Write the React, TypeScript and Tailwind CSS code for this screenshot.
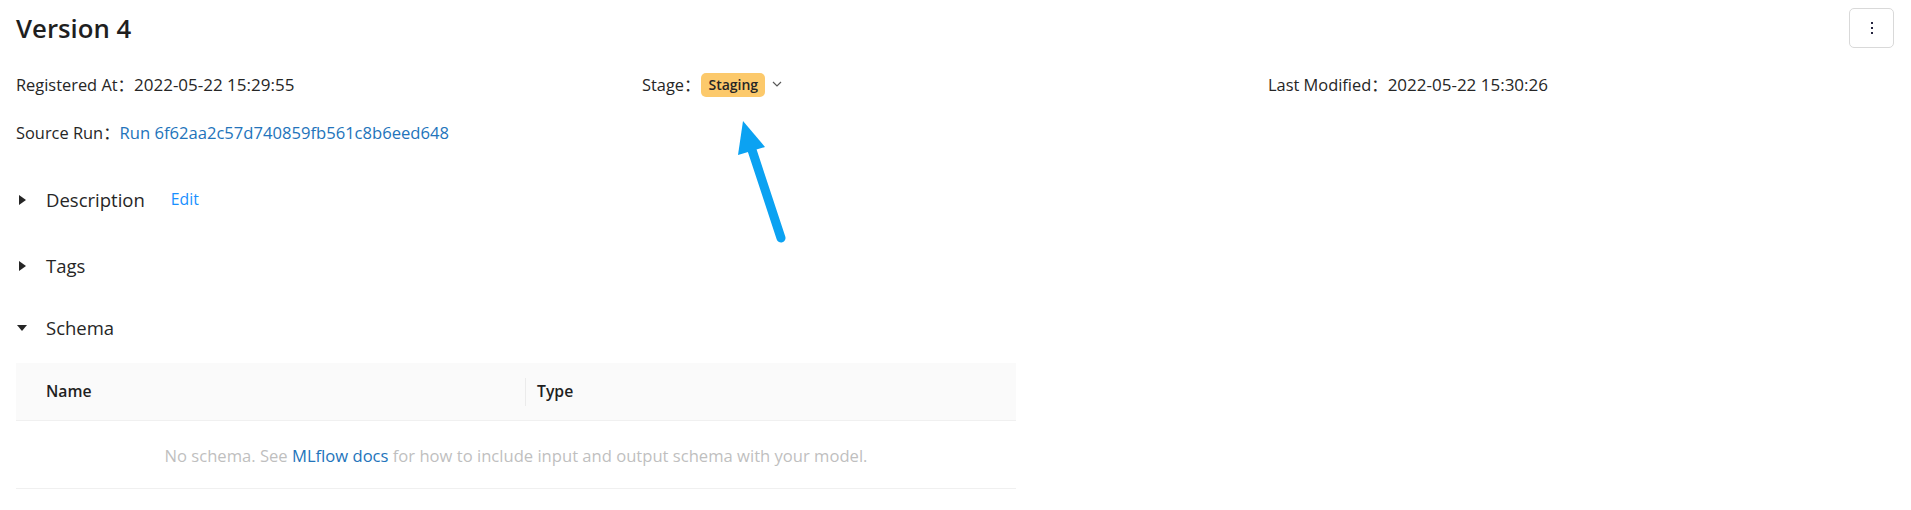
import React from "react";

// Small filled caret used by the collapsible section headers
function Caret({ open }: { open?: boolean }) {
  if (open) {
    return (
      <svg width="10" height="6" viewBox="0 0 10 6" className="ml-[1px] mr-[19px] shrink-0">
        <polygon points="0,0 10,0 5,6" fill="#262626" />
      </svg>
    );
  }
  return (
    <svg width="7" height="10" viewBox="0 0 7 10" className="ml-[3px] mr-[20px] shrink-0">
      <polygon points="0,0 7,5 0,10" fill="#262626" />
    </svg>
  );
}

function Section({ title, open, children }: { title: string; open?: boolean; children?: React.ReactNode }) {
  return (
    <div className="flex items-center h-[28px]">
      <Caret open={open} />
      <span className="text-[18.5px] leading-[28px] text-[#262626]">{title}</span>
      {children}
    </div>
  );
}

function Label({ children }: { children: React.ReactNode }) {
  return <span className="text-[16.4px]">{children}：</span>;
}

export default function App() {
  return (
    <div className="relative min-h-screen bg-white text-[#262626] font-['Open_Sans','Noto_Sans_CJK_SC',sans-serif]">
      <div className="pl-4 pr-[17px] pt-2">
        {/* Header */}
        <div className="flex items-center justify-between h-[40px]">
          <h1 className="text-[25.75px] leading-[36px] font-semibold text-[#1f1f1f]">Version 4</h1>
          <button
            type="button"
            aria-label="More"
            className="w-[45px] h-[40px] border border-[#d9d9d9] rounded-[5px] flex flex-col items-center justify-center gap-[3px]"
          >
            <span className="w-[2px] h-[2px] bg-[#262640]" />
            <span className="w-[2px] h-[2px] bg-[#262640]" />
            <span className="w-[2px] h-[2px] bg-[#262640]" />
          </button>
        </div>

        {/* Descriptions */}
        <div className="grid grid-cols-3 mt-[25px] text-[16.4px] leading-[24px]">
          <div className="pb-[24px]">
            <Label>Registered At</Label>
            <span className="text-[17px]">2022-05-22 15:29:55</span>
          </div>
          <div className="pb-[24px] flex items-center">
            <Label>Stage</Label>
            <span className="ml-[1px] h-[24px] px-[7px] rounded-[5px] bg-[#fcc96b] text-[14px] font-semibold leading-[24px] text-[#262626]">
              Staging
            </span>
            <svg width="10" height="6" viewBox="0 0 10 6" className="ml-[7px] mt-[-2px]">
              <polyline points="1,1 5,5 9,1" fill="none" stroke="#595959" strokeWidth="1.2" />
            </svg>
          </div>
          <div className="pb-[24px]">
            <Label>Last Modified</Label>
            <span className="text-[17px]">2022-05-22 15:30:26</span>
          </div>
          <div className="col-span-3 pb-[24px]">
            <Label>Source Run</Label>
            <a href="#" className="text-[16.6px] text-[#2374bb]">Run 6f62aa2c57d740859fb561c8b6eed648</a>
          </div>
        </div>

        {/* Collapsible sections */}
        <div className="mt-[17px] flex flex-col gap-[38px]">
          <Section title="Description">
            <a href="#" className="ml-[26px] text-[15.75px] text-[#1890ff]">Edit</a>
          </Section>
          <Section title="Tags" />
          <div className="mt-[-4px]">
            <Section title="Schema" open />
          </div>
        </div>

        {/* Schema table */}
        <div className="mt-[21px] w-[1000px] text-[15.75px]">
          <div className="flex items-center h-[58px] bg-[#fafafa] border-b border-[#f0f0f0] font-semibold text-[#1f1f1f]">
            <div className="w-[509px] pl-[30px]">Name</div>
            <div className="w-px h-[28px] bg-[#ebebeb]" />
            <div className="pl-[11px]">Type</div>
          </div>
          <div className="h-[68px] pt-[4px] flex items-center justify-center border-b border-[#f0f0f0] text-[16.6px] text-[#bfbfbf]">
            <span>
              No schema. See <a href="#" className="text-[#2374bb]">MLflow docs</a> for how to include input and output schema
              with your model.
            </span>
          </div>
        </div>
      </div>

      {/* Annotation arrow */}
      <svg
        className="absolute left-0 top-0 pointer-events-none"
        width="1911"
        height="510"
        viewBox="0 0 1911 510"
      >
        <line x1="781" y1="238" x2="752" y2="150" stroke="#0ba2f2" strokeWidth="9" strokeLinecap="round" />
        <polygon points="743,121 738,155 765,147" fill="#0ba2f2" />
      </svg>
    </div>
  );
}
